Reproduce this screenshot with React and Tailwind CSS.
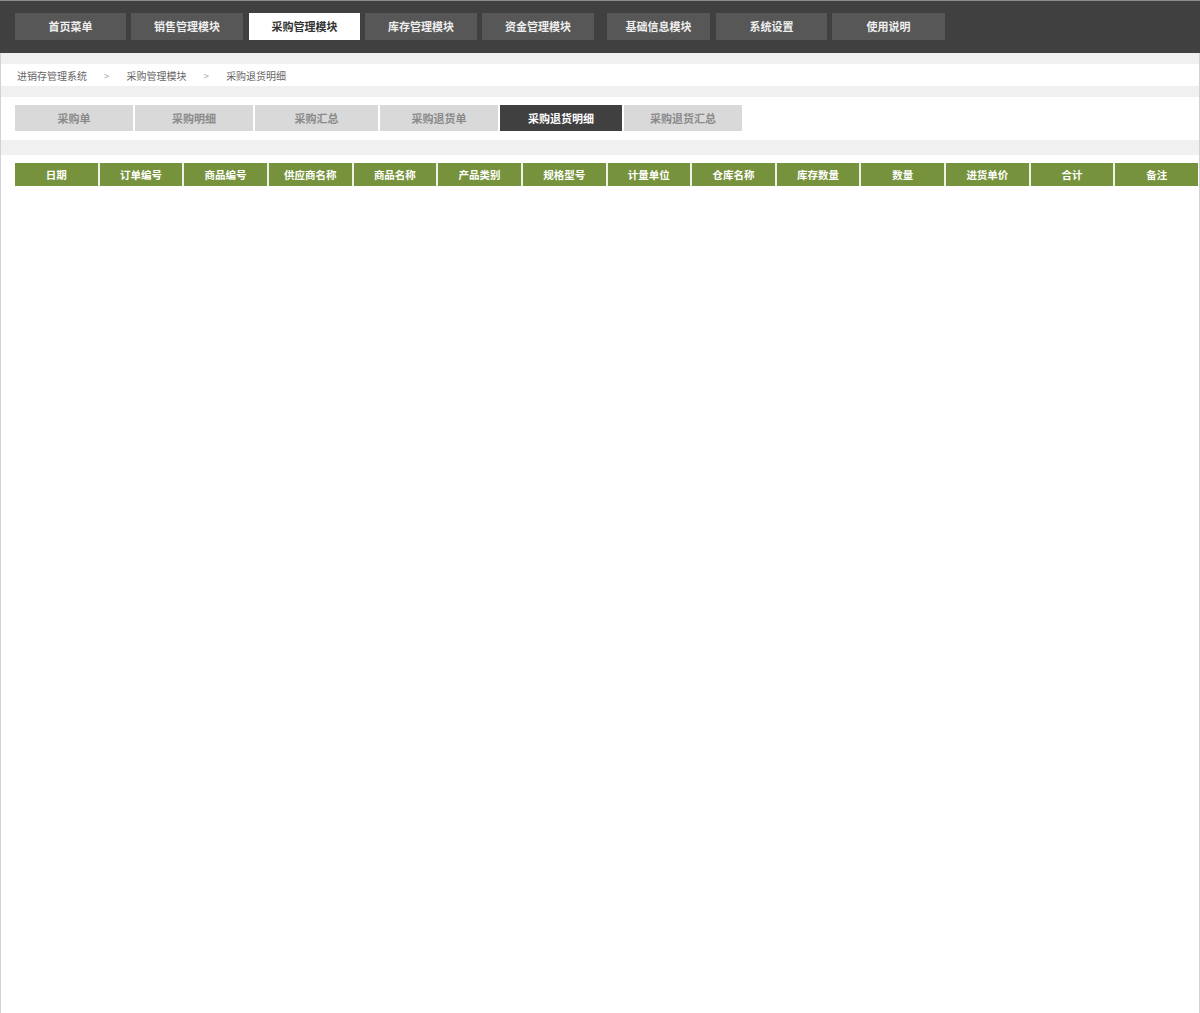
import React from 'react';

const navItems = [
  { label: '首页菜单', cls: 'w-[111px]' },
  { label: '销售管理模块', cls: 'w-[112px] ml-[5px]' },
  { label: '采购管理模块', cls: 'w-[111px] ml-[6px]', active: true },
  { label: '库存管理模块', cls: 'w-[112px] ml-[5px]' },
  { label: '资金管理模块', cls: 'w-[112px] ml-[5px]' },
  { label: '基础信息模块', cls: 'w-[103px] ml-[13px]' },
  { label: '系统设置', cls: 'w-[111px] ml-[6px]' },
  { label: '使用说明', cls: 'w-[113px] ml-[5px]' },
];

const subTabs = [
  { label: '采购单', cls: 'w-[118px]' },
  { label: '采购明细', cls: 'w-[118px]' },
  { label: '采购汇总', cls: 'w-[123px]' },
  { label: '采购退货单', cls: 'w-[118px]' },
  { label: '采购退货明细', cls: 'w-[122px]', active: true },
  { label: '采购退货汇总', cls: 'w-[118px]' },
];

const columns = [
  '日期', '订单编号', '商品编号', '供应商名称', '商品名称', '产品类别', '规格型号',
  '计量单位', '仓库名称', '库存数量', '数量', '进货单价', '合计', '备注',
];

const crumbs = ['进销存管理系统', '采购管理模块', '采购退货明细'];

function App() {
  return (
    <div
      className="min-h-screen flex flex-col bg-white"
      style={{ fontFamily: '"Noto Sans CJK SC", "Noto Sans", sans-serif' }}
    >
      {/* top module bar */}
      <div className="h-[53px] shrink-0 bg-[#404040] border-t border-[#8c8c8c] flex items-start pt-[12px] pl-[15px]">
        {navItems.map((item) => (
          <div
            key={item.label}
            className={`${item.cls} h-[27px] flex items-center justify-center pb-[1px] text-[11px] font-bold ${
              item.active ? 'bg-white text-[#333]' : 'bg-[#575757] text-[#eeeeee]'
            }`}
          >
            {item.label}
          </div>
        ))}
      </div>

      <div className="flex-1 flex flex-col border-x border-[#d2d2d2]">
        <div className="h-[11px] bg-[#f0f0f0]" />

        {/* breadcrumb */}
        <div className="h-[22px] flex items-center pl-[16px] text-[10px] text-[#666]">
          {crumbs.map((c, i) => (
            <React.Fragment key={c}>
              {i > 0 && <span className="mx-[17px] text-[#aaa]">&gt;</span>}
              <span>{c}</span>
            </React.Fragment>
          ))}
        </div>

        <div className="h-[11px] bg-[#f0f0f0]" />

        {/* sub tabs */}
        <div className="h-[43px] flex items-start pt-[8px] pl-[14px] gap-[2px]">
          {subTabs.map((t) => (
            <div
              key={t.label}
              className={`${t.cls} h-[26px] flex items-center justify-center text-[11px] font-bold ${
                t.active ? 'bg-[#404040] text-white' : 'bg-[#d9d9d9] text-[#8a8a8a]'
              }`}
            >
              {t.label}
            </div>
          ))}
        </div>

        <div className="h-[15px] bg-[#f0f0f0]" />

        {/* detail table */}
        <div className="flex-1 pt-[8px] pl-[14px] pr-[1px]">
          <div className="grid grid-cols-14 gap-[2px] bg-[#eef2e4]">
            {columns.map((col) => (
              <div
                key={col}
                className="h-[23px] flex items-center justify-center bg-[#76923c] text-white text-[10.5px] font-bold"
              >
                {col}
              </div>
            ))}
          </div>
        </div>
      </div>
    </div>
  );
}

export default App;
